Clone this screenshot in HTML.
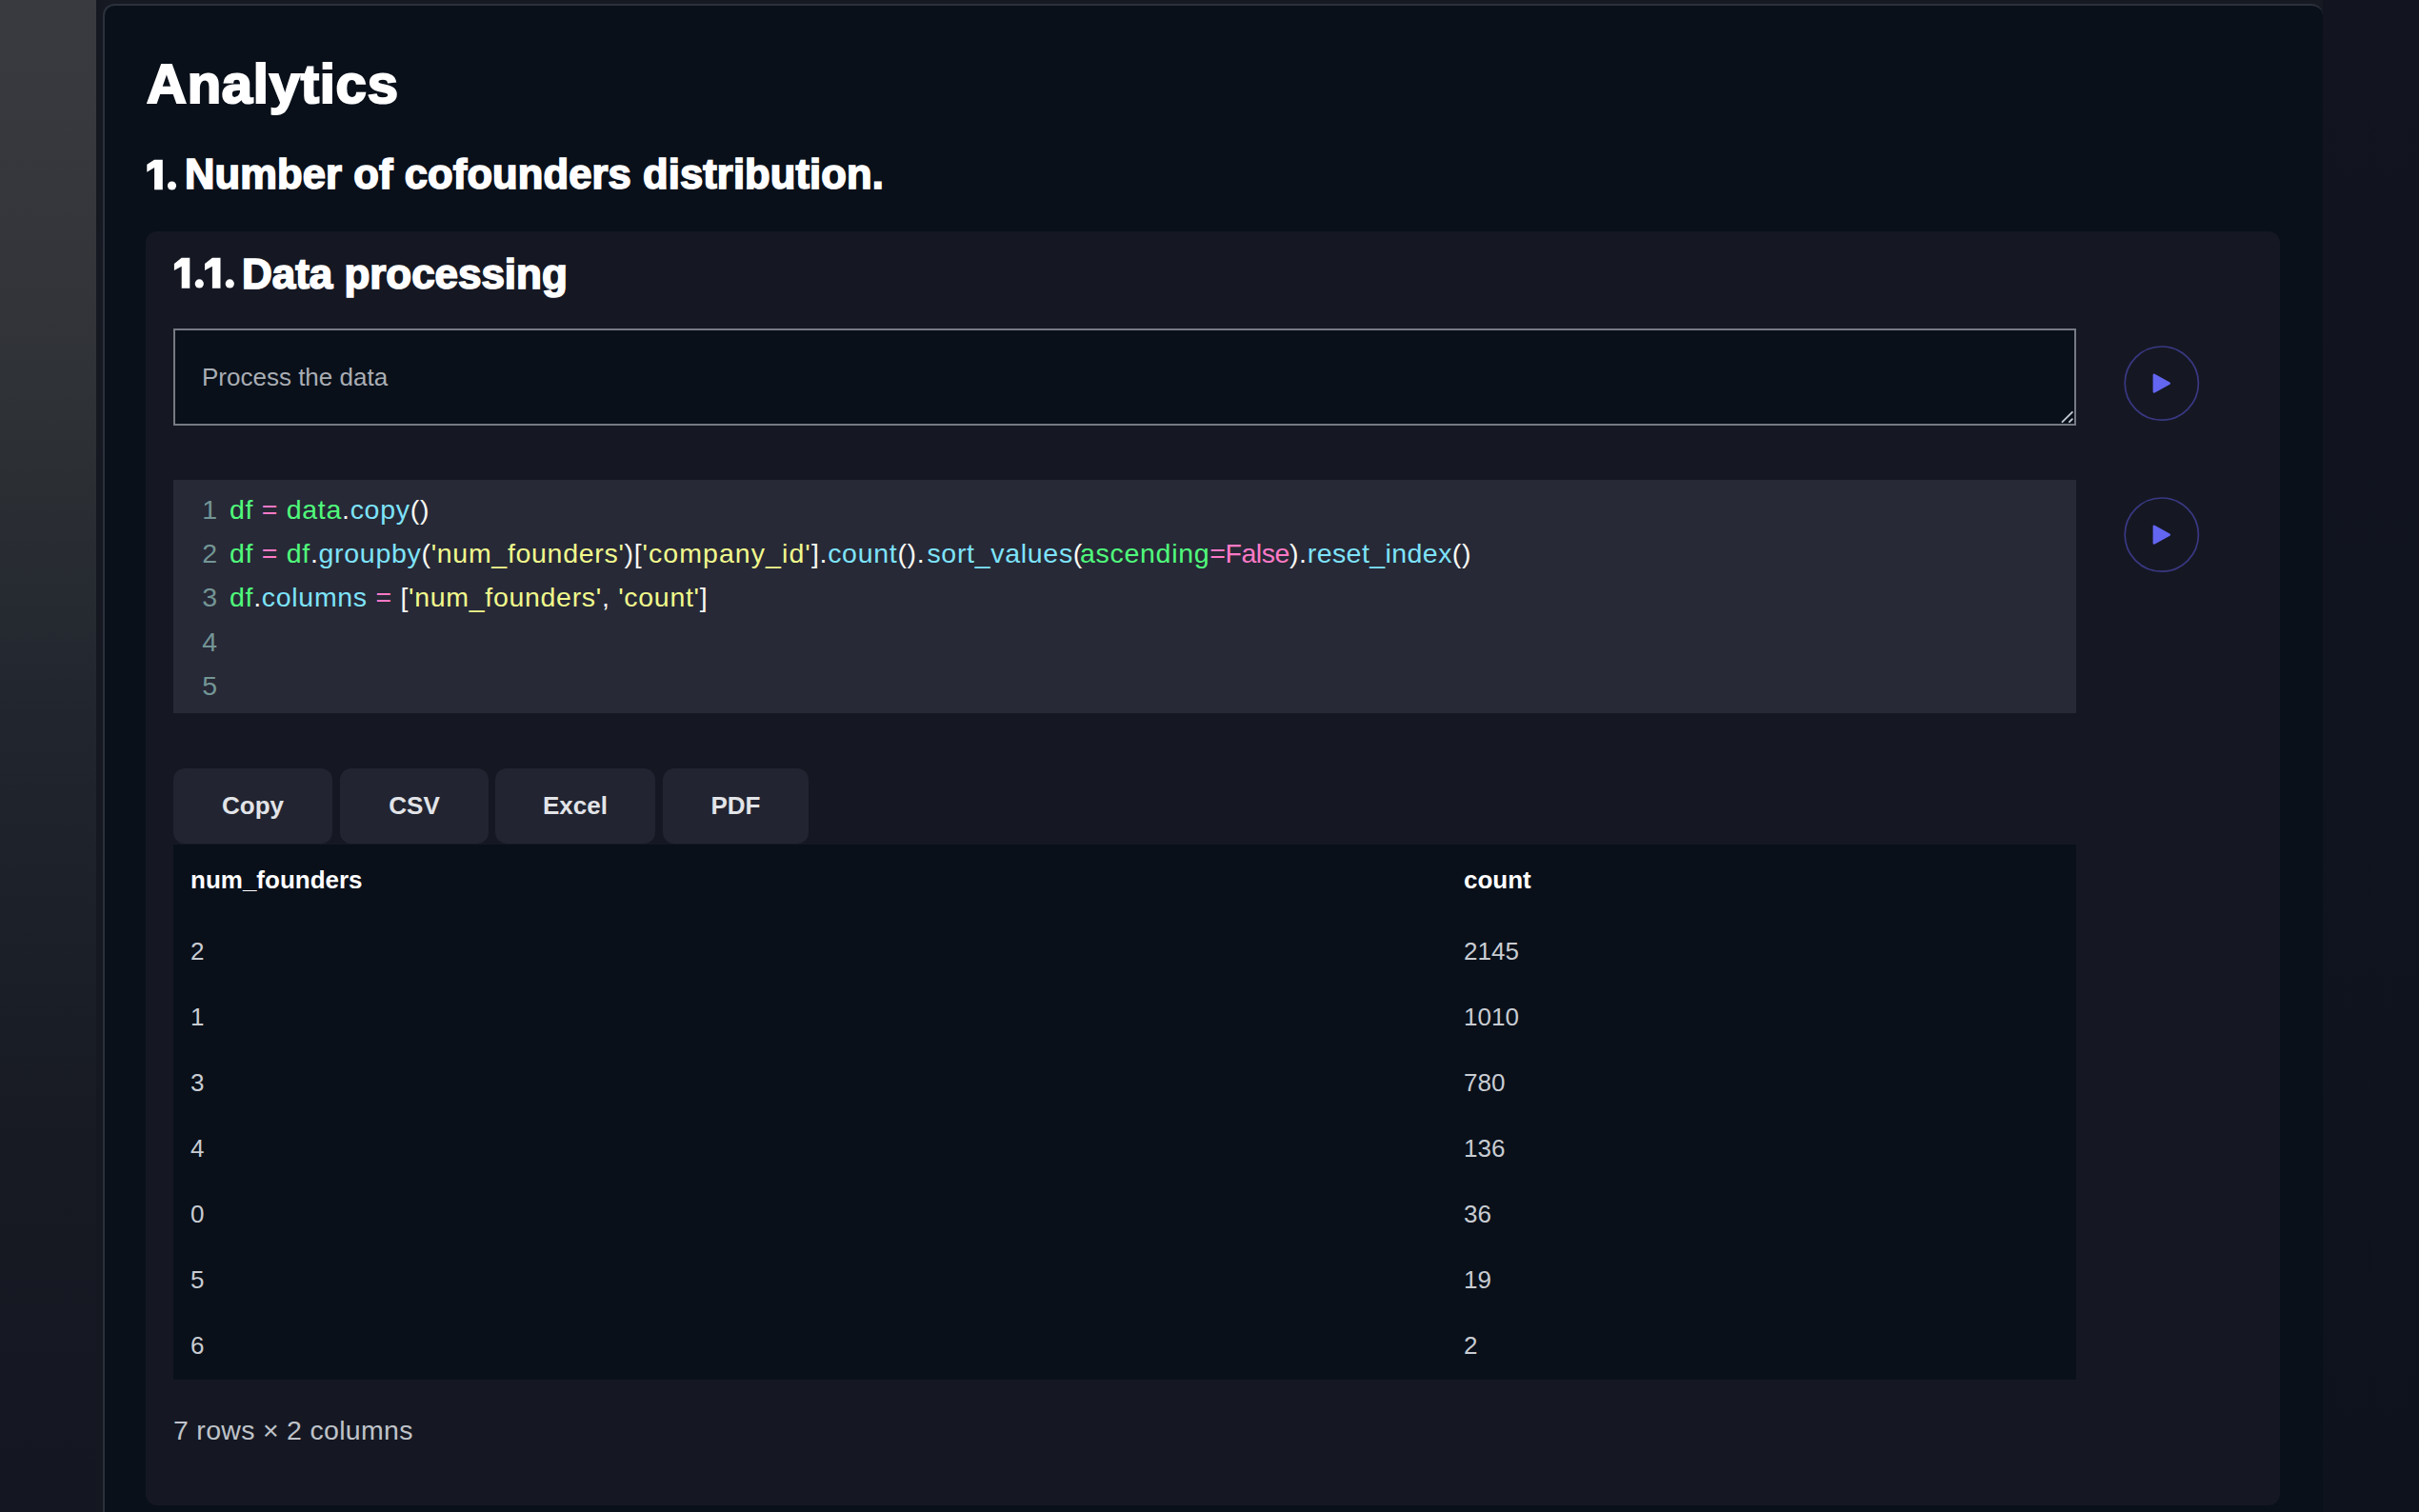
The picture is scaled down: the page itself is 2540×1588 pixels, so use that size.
<!DOCTYPE html>
<html>
<head>
<meta charset="utf-8">
<style>
*{box-sizing:border-box;margin:0;padding:0}
html,body{width:2540px;height:1588px;overflow:hidden}
body{background:#161921;font-family:"Liberation Sans",sans-serif;position:relative}
.abs{position:absolute}
#leftstrip{left:0;top:0;width:101px;height:1588px;background:linear-gradient(180deg,#393a3f 0%,#38393e 6.6%,#2f3236 25.5%,#1f242d 50.7%,#171a23 75.9%,#141621 100%)}
#gap{left:101px;top:0;width:7px;height:1588px;background:#151820}
#rightbg{left:2439px;top:0;width:101px;height:1588px;background:linear-gradient(180deg,#121420,#10141f 50%,#0e121c)}
#clip{left:0;top:0;width:2439px;height:1588px;overflow:hidden}
#panel{left:108px;top:4px;width:2331px;height:1700px;background:#09101a;border:2px solid #2b303a;border-right-width:0;border-radius:12px}
.h{color:#fff;font-weight:700;white-space:nowrap;line-height:1}
#h1{left:154px;top:58.5px;font-size:58px;letter-spacing:0.75px;-webkit-text-stroke:2.2px #fff}
#h2{left:194px;top:162px;font-size:43.5px;letter-spacing:0.12px;-webkit-text-stroke:1.7px #fff}
#card{left:153px;top:243px;width:2241px;height:1338px;background:#151823;border-radius:12px}
#h3{left:254px;top:265.5px;font-size:44px;letter-spacing:-0.04px;-webkit-text-stroke:1.7px #fff}
#ta{left:182px;top:345px;width:1998px;height:102px;border:2px solid #767a82;background:#09101a}
#tatext{left:212px;top:383px;font-size:26px;color:#a9adb4;white-space:nowrap;line-height:1}
.play{width:79px;height:79px;border-radius:50%;border:2px solid #37378a}
#code{left:182px;top:504px;width:1998px;height:245px;background:#272937}
.ln{position:absolute;left:182px;width:46px;text-align:right;font-size:28.5px;color:#739595;line-height:1}
.cl{position:absolute;left:241px;font-size:28.5px;letter-spacing:0.7px;color:#f8f8f2;white-space:nowrap;line-height:1}
.g{color:#50fa7b}.p{color:#ff79c6}.c{color:#7ee3fa}.y{color:#f1fa8c}.w{color:#f8f8f2}
.btn{top:807px;height:79px;background:#222431;border-radius:12px;color:#e2e4e8;font-size:26px;font-weight:700;text-align:center;line-height:79px}
#table{left:182px;top:887px;width:1998px;height:562px;background:#09101a}
.th{position:absolute;font-size:26px;font-weight:700;color:#fff;line-height:1;white-space:nowrap}
.td{position:absolute;font-size:26px;color:#c8ccd2;line-height:1;white-space:nowrap}
#foot{left:182px;top:1488px;font-size:28.5px;letter-spacing:0.3px;color:#bfc3c9;line-height:1;white-space:nowrap}
</style>
</head>
<body>
<div id="leftstrip" class="abs"></div>
<div id="gap" class="abs"></div>
<div id="rightbg" class="abs"></div>
<div id="clip" class="abs">
  <div id="panel" class="abs"></div>
</div>
<div id="h1" class="abs h">Analytics</div>
<div id="h2" class="abs h"><span style="position:absolute;right:100%;color:transparent;-webkit-text-stroke:0 transparent">1. </span>Number of cofounders distribution.</div>
<div id="card" class="abs"></div>
<div id="h3" class="abs h"><span style="position:absolute;right:100%;color:transparent;-webkit-text-stroke:0 transparent">1.1. </span>Data processing</div>
<svg class="abs" style="left:0;top:0" width="400" height="320" viewBox="0 0 400 320"><path d="M154.3,172.8 L162.1,167.7 L170.8,167.7 L170.8,199.2 L162.1,199.2 L162.1,176.0 L154.3,180.8 Z" fill="#fff"/><circle cx="180.5" cy="195.0" r="4.6" fill="#fff"/><path d="M182.9,277.0 L190.7,270.8 L199.3,270.8 L199.3,302.7 L190.7,302.7 L190.7,279.7 L182.9,284.0 Z" fill="#fff"/><circle cx="209.3" cy="297.9" r="4.6" fill="#fff"/><path d="M215.0,277.0 L222.9,270.8 L231.5,270.8 L231.5,302.7 L222.9,302.7 L222.9,279.7 L215.0,284.0 Z" fill="#fff"/><circle cx="241.3" cy="297.9" r="4.6" fill="#fff"/></svg>
<div id="ta" class="abs"></div>
<svg class="abs" style="left:2150px;top:420px" width="40" height="40" viewBox="0 0 40 40"><path d="M15.5,23.2 L25.9,12.8 M22.9,23.2 L25.9,20.2" stroke="#c3c7cf" stroke-width="1.9" stroke-linecap="round"/></svg>
<div id="tatext" class="abs">Process the data</div>
<svg class="abs" style="left:2225px;top:358px" width="90" height="90" viewBox="0 0 90 90"><circle cx="44.8" cy="44.6" r="38.6" fill="none" stroke="#3a3883" stroke-width="1.7"/><path d="M36.9,35.8 L52.7,44.6 L36.9,53.4 Z" fill="#6366f1" stroke="#6366f1" stroke-width="2.6" stroke-linejoin="round"/></svg>
<svg class="abs" style="left:2225px;top:517.2px" width="90" height="90" viewBox="0 0 90 90"><circle cx="44.8" cy="44.6" r="38.6" fill="none" stroke="#3a3883" stroke-width="1.7"/><path d="M36.9,35.8 L52.7,44.6 L36.9,53.4 Z" fill="#6366f1" stroke="#6366f1" stroke-width="2.6" stroke-linejoin="round"/></svg>
<div id="code" class="abs"></div>
<div class="ln" style="top:521px">1</div><div class="cl" style="top:521px"><span class="g">df</span> <span class="p">=</span> <span class="g">data</span>.<span class="c">copy</span>()</div>
<div class="ln" style="top:567px">2</div><div class="cl" style="top:567px"><span class="g">df</span> <span class="p">=</span> <span class="g">df</span>.<span class="c">groupby</span>(<span class="y">'num_founders'</span>)[<span class="y" style="letter-spacing:1.08px">'company_id'</span>].<span class="c">count</span>().<span class="c" style="margin-left:2px">sort_values</span>(<span class="g" style="letter-spacing:0.7px;margin-left:-3px">ascending</span><span class="p" style="letter-spacing:-0.45px">=False</span>).<span class="c" style="letter-spacing:0.43px">reset_index</span>()</div>
<div class="ln" style="top:613px">3</div><div class="cl" style="top:613px"><span class="g">df</span>.<span class="c">columns</span> <span class="p">=</span> [<span class="y">'num_founders'</span>, <span class="y">'count'</span>]</div>
<div class="ln" style="top:659.5px">4</div>
<div class="ln" style="top:705.7px">5</div>

<div class="abs btn" style="left:182px;width:167px">Copy</div>
<div class="abs btn" style="left:357px;width:156px">CSV</div>
<div class="abs btn" style="left:520px;width:168px">Excel</div>
<div class="abs btn" style="left:696px;width:153px">PDF</div>
<div id="table" class="abs"></div>
<div class="th" style="left:200px;top:911px">num_founders</div><div class="th" style="left:1537px;top:911px">count</div>
<div class="td" style="left:200px;top:986.3px">2</div><div class="td" style="left:1537px;top:986.3px">2145</div>
<div class="td" style="left:200px;top:1055.2px">1</div><div class="td" style="left:1537px;top:1055.2px">1010</div>
<div class="td" style="left:200px;top:1124.1px">3</div><div class="td" style="left:1537px;top:1124.1px">780</div>
<div class="td" style="left:200px;top:1193.0px">4</div><div class="td" style="left:1537px;top:1193.0px">136</div>
<div class="td" style="left:200px;top:1261.9px">0</div><div class="td" style="left:1537px;top:1261.9px">36</div>
<div class="td" style="left:200px;top:1330.8px">5</div><div class="td" style="left:1537px;top:1330.8px">19</div>
<div class="td" style="left:200px;top:1399.7px">6</div><div class="td" style="left:1537px;top:1399.7px">2</div>

<div id="foot" class="abs">7 rows × 2 columns</div>
</body>
</html>
